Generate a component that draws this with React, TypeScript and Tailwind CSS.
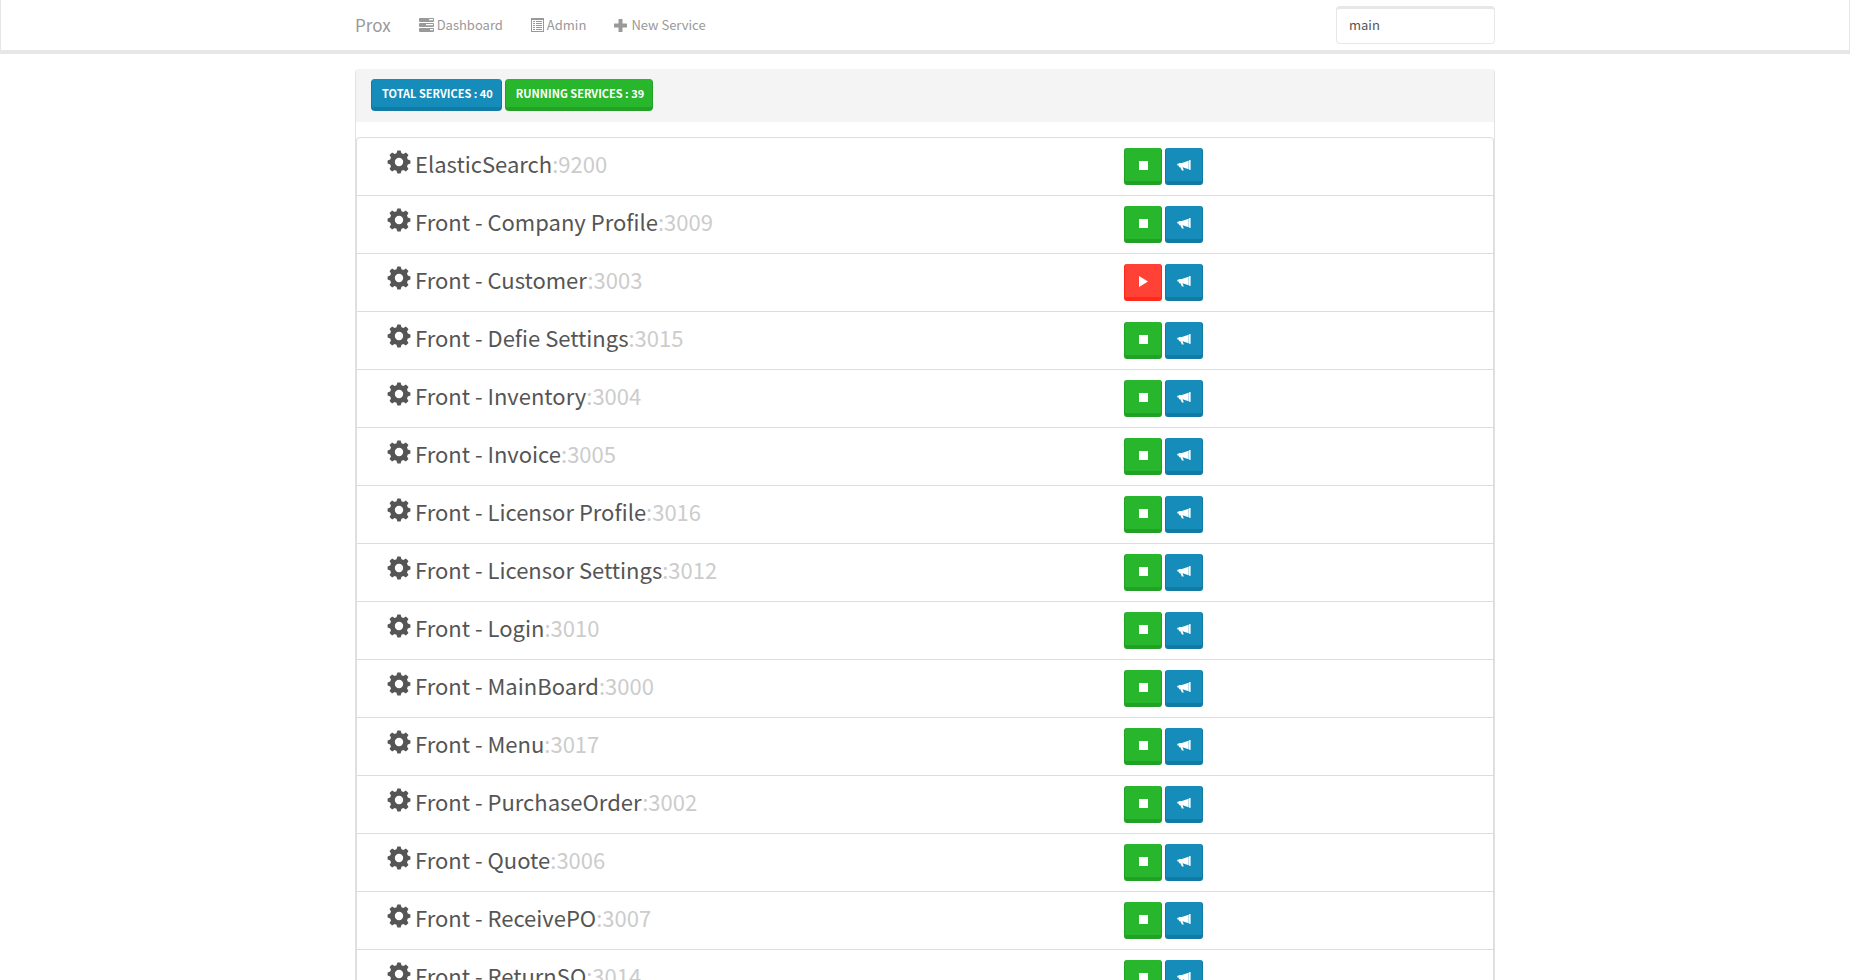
import React from "react";

type Service = { name: string; port: number; running: boolean };

const services: Service[] = [
  { name: "ElasticSearch", port: 9200, running: true },
  { name: "Front - Company Profile", port: 3009, running: true },
  { name: "Front - Customer", port: 3003, running: false },
  { name: "Front - Defie Settings", port: 3015, running: true },
  { name: "Front - Inventory", port: 3004, running: true },
  { name: "Front - Invoice", port: 3005, running: true },
  { name: "Front - Licensor Profile", port: 3016, running: true },
  { name: "Front - Licensor Settings", port: 3012, running: true },
  { name: "Front - Login", port: 3010, running: true },
  { name: "Front - MainBoard", port: 3000, running: true },
  { name: "Front - Menu", port: 3017, running: true },
  { name: "Front - PurchaseOrder", port: 3002, running: true },
  { name: "Front - Quote", port: 3006, running: true },
  { name: "Front - ReceivePO", port: 3007, running: true },
  { name: "Front - ReturnSO", port: 3014, running: true },
];

function ServerIcon() {
  return (
    <svg viewBox="0 0 15 14" className="h-3.5 w-[15px]" fill="currentColor" aria-hidden="true">
      <path
        fillRule="evenodd"
        d="M1 0h13a1 1 0 0 1 1 1v2a1 1 0 0 1-1 1H1a1 1 0 0 1-1-1V1a1 1 0 0 1 1-1zm9 1v1.2h4V1zM1 5h13a1 1 0 0 1 1 1v2a1 1 0 0 1-1 1H1a1 1 0 0 1-1-1V6a1 1 0 0 1 1-1zm6 1v1.2h7V6zM1 10h13a1 1 0 0 1 1 1v2a1 1 0 0 1-1 1H1a1 1 0 0 1-1-1v-2a1 1 0 0 1 1-1zm10 1v1.2h3V11z"
      />
    </svg>
  );
}

function ListIcon() {
  return (
    <svg viewBox="0 0 13 14" className="h-3.5 w-[13px]" fill="currentColor" aria-hidden="true">
      <path
        fillRule="evenodd"
        d="M0 0h13v14H0zM1 2v11h11V2zM2 3h2v1H2zm3 0h6v1H5zM2 5h2v1H2zm3 0h6v1H5zM2 7h2v1H2zm3 0h6v1H5zM2 9h2v1H2zm3 0h6v1H5zM2 11h2v1H2zm3 0h6v1H5z"
      />
    </svg>
  );
}

function PlusIcon() {
  return (
    <svg viewBox="0 0 13 13" className="h-[13px] w-[13px]" fill="currentColor" aria-hidden="true">
      <path d="M5 0h3a.5.5 0 0 1 .5.5v4h4a.5.5 0 0 1 .5.5v3a.5.5 0 0 1-.5.5h-4v4a.5.5 0 0 1-.5.5H5a.5.5 0 0 1-.5-.5v-4h-4A.5.5 0 0 1 0 8V5a.5.5 0 0 1 .5-.5h4v-4A.5.5 0 0 1 5 0z" />
    </svg>
  );
}

function CogIcon() {
  return (
    <svg viewBox="-12 -12 24 24" className="h-6 w-6 shrink-0" fill="currentColor" aria-hidden="true">
      <path
        fillRule="evenodd"
        d="M-1.6-11.4h3.2L2.5-8.8 4.4-8 6.9-9.5 9.5-6.9 8-4.4 8.8-2.5 11.4-1.6V1.6L8.8 2.5 8 4.4 9.5 6.9 6.9 9.5 4.4 8 2.5 8.8 1.6 11.4H-1.6L-2.5 8.8-4.4 8-6.9 9.5-9.5 6.9-8 4.4-8.8 2.5-11.4 1.6V-1.6L-8.8-2.5-8-4.4-9.5-6.9-6.9-9.5-4.4-8-2.5-8.8zM0-4.2a4.2 4.2 0 1 0 0 8.4a4.2 4.2 0 1 0 0-8.4z"
      />
    </svg>
  );
}

function BullhornIcon() {
  return (
    <svg viewBox="0 0 14 11" className="h-[11px] w-3.5" fill="currentColor" aria-hidden="true">
      <path d="M11.9.3 13.6.1v9.8l-1.7-.3zM11.6.8v8.4L5.6 7.3l1.2 3.2H4.9L3.4 7.2H2.2L1.6 5.6.4 5.4.2 3.8h1.4l.6-.9h2.6z" />
    </svg>
  );
}

function StopIcon() {
  return <span className="block h-[9px] w-[9px] bg-white" />;
}

function PlayIcon() {
  return (
    <svg viewBox="0 0 9 11" className="h-[11px] w-[9px]" fill="currentColor" aria-hidden="true">
      <path d="M0 0 9 5.5 0 11z" />
    </svg>
  );
}

const actionButton = "flex h-[37px] w-[38px] items-center justify-center rounded-[3px] border border-t-0 border-b-4 pt-0.5 text-white";

function ServiceRow({ service }: { service: Service }) {
  return (
    <li className="grid grid-cols-12 border-t border-[#ddd] px-[15px] py-2.5 first:rounded-t-[4px]">
      <h3 className="col-span-8 flex gap-1 px-[15px] text-[22px] leading-[26px] text-[#555]">
        <span className="pt-0.5">
          <CogIcon />
        </span>
        <span className="pt-0.5">
          {service.name}
          <small className="text-[22px] text-[#ccc]">:{service.port}</small>
        </span>
      </h3>
      <div className="col-span-4 flex gap-[3px] px-[15px]">
        {service.running ? (
          <button type="button" aria-label={`Stop ${service.name}`} className={`${actionButton} border-[#23a127] bg-[#28b62c]`}>
            <StopIcon />
          </button>
        ) : (
          <button type="button" aria-label={`Start ${service.name}`} className={`${actionButton} border-[#ff291c] bg-[#ff4136]`}>
            <PlayIcon />
          </button>
        )}
        <button type="button" aria-label={`Announce ${service.name}`} className={`${actionButton} border-[#127ba3] bg-[#158cba]`}>
          <BullhornIcon />
        </button>
      </div>
    </li>
  );
}

export default function App() {
  return (
    <div className="min-h-screen bg-white font-['Noto_Sans_CJK_SC','Noto_Sans',sans-serif] text-[13px] leading-5 text-[#555]">
      <nav className="border-x border-b-4 border-[#e6e6e6] bg-white">
        <div className="mx-auto flex h-[50px] max-w-[1140px] items-center text-[#999]">
          <a href="#" className="mr-7 text-[17px]">Prox</a>
          <div className="flex gap-7">
            <a href="#dashboard" className="flex items-center gap-[3px]"><ServerIcon />Dashboard</a>
            <a href="#admin" className="flex items-center gap-[3px]"><ListIcon />Admin</a>
            <a href="#new" className="flex items-center gap-1"><PlusIcon />New Service</a>
          </div>
          <input
            type="text"
            aria-label="Branch"
            defaultValue="main"
            className="ml-auto h-[38px] w-[159px] rounded-[4px] border border-t-[3px] border-[#e7e7e7] bg-white px-3 pb-1 text-[13px] text-[#555]"
          />
        </div>
      </nav>
      <main className="mx-auto mt-[15px] max-w-[1140px] rounded-t-[4px] border-x border-[#e2e2e2]">
        <header className="flex gap-[3px] rounded-t-[3px] bg-[#f4f4f4] px-[15px] pt-2.5 pb-[11px] text-[11px] font-bold text-white">
          <span className="rounded-sm border border-t-0 border-b-4 border-[#127ba3] bg-[#158cba] py-1 pr-2 pl-2.5">TOTAL SERVICES : 40</span>
          <span className="rounded-sm border border-t-0 border-b-4 border-[#23a127] bg-[#28b62c] py-1 pr-2 pl-2.5">RUNNING SERVICES : 39</span>
        </header>
        <ul className="mt-[15px] rounded-t-[4px] border-x border-[#ddd]">
          {services.map((service) => (
            <ServiceRow key={service.port} service={service} />
          ))}
        </ul>
      </main>
    </div>
  );
}
